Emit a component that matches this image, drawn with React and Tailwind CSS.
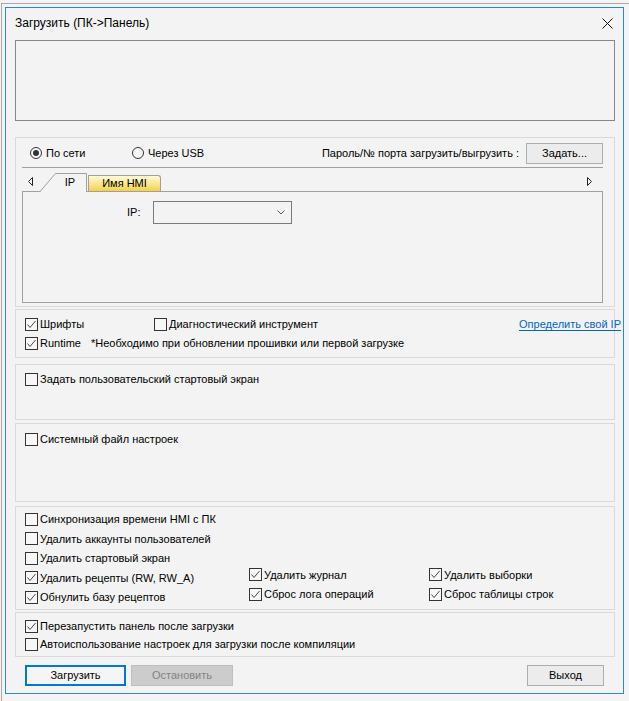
import React from 'react';

// Диалог "Загрузить (ПК->Панель)" в стиле Windows 10
const FONT = "font-['Liberation_Sans',Arial,sans-serif]";

const CheckMark = () => (
  <svg width="11" height="11" viewBox="0 0 11 11" className="block">
    <path d="M1.5 5.5 L4 8.5 L9.5 2" fill="none" stroke="#4a4a4a" strokeWidth="1" />
  </svg>
);

const Checkbox = ({ checked, label }) => (
  <div className="flex items-center">
    <div className="w-[13px] h-[13px] border border-[#333] bg-[#f7f7f7] flex items-center justify-center shrink-0">
      {checked && <CheckMark />}
    </div>
    <span className="ml-[2px] whitespace-nowrap text-[#000]">{label}</span>
  </div>
);

const Radio = ({ checked, label }) => (
  <div className="flex items-center">
    <div className="w-[12px] h-[12px] rounded-full border border-[#333] bg-[#f7f7f7] flex items-center justify-center shrink-0">
      {checked && <div className="w-[6px] h-[6px] rounded-full bg-[#333]" />}
    </div>
    <span className="ml-[4px] whitespace-nowrap">{label}</span>
  </div>
);

const Group = ({ className = '', children }) => (
  <div className={`border border-[#d9d9d9] ${className}`}>{children}</div>
);

const Button = ({ children, className = '' }) => (
  <button className={`h-[21px] flex items-center justify-center text-[11px] ${className}`}>{children}</button>
);

export default function App() {
  return (
    <div className={`w-[629px] h-[701px] bg-[#f4f4f4] pt-[3px] pl-[1px] overflow-hidden text-[11px] text-black ${FONT}`}>
      <div className="h-full border-t border-l border-[#a9a9a9] pt-[3px] pl-[3px]">
        <div className="w-[619px] h-[687px] border border-[#2b88d8] bg-[#f2f3f2] flex flex-col">
          {/* Заголовок */}
          <div className="h-[30px] flex items-center pl-[9px] pr-[10px]">
            <span className="text-[12px]">Загрузить (ПК-&gt;Панель)</span>
            <svg width="11" height="11" viewBox="0 0 11 11" className="ml-auto">
              <path d="M0.5 0.5 L10.5 10.5 M10.5 0.5 L0.5 10.5" stroke="#111" strokeWidth="1" />
            </svg>
          </div>

          <div className="pl-[9px] pr-[8px] flex flex-col">
            {/* Поле сообщений */}
            <div className="mt-[2px] h-[81px] border border-[#828790]" />

            {/* Соединение */}
            <Group className="mt-[16px] h-[170px] flex flex-col">
              <div className="mt-[5px] h-[20px] flex items-center pl-[14px] pr-[11px]">
                <div className="w-[102px]">
                  <Radio checked label="По сети" />
                </div>
                <Radio label="Через USB" />
                <span className="ml-auto mr-[7px]">Пароль/№ порта загрузить/выгрузить :</span>
                <Button className="w-[77px] border border-[#adadad] bg-[#ececec]">Задать...</Button>
              </div>
              <div className="mt-[4px] ml-[6px] mr-[11px] h-px bg-[#a0a0a0]" />

              <div className="ml-[6px] mr-[11px] flex flex-col">
                {/* Вкладки */}
                <div className="h-[23px] flex items-end">
                  <div className="w-[18px] h-[23px] flex items-center pl-[6px] pt-[4px]">
                    <svg width="5" height="9" viewBox="0 0 5 9">
                      <path d="M4.5 0.5 L0.5 4.5 L4.5 8.5 Z" fill="none" stroke="#222" strokeWidth="1" />
                    </svg>
                  </div>
                  <div className="relative z-10 -mb-px w-[48px] h-[19px] flex items-center justify-center pl-[12px]">
                    <svg width="48" height="19" viewBox="0 0 48 19" className="absolute inset-0">
                      <path d="M0 18.5 L15.5 0.5 H46.5 V18.5" fill="#f2f3f2" stroke="#a0a0a0" strokeWidth="1" />
                      <path d="M1 18.5 H46" stroke="#f2f3f2" strokeWidth="1.2" />
                    </svg>
                    <span className="relative">IP</span>
                  </div>
                  <div className="w-[73px] h-[16px] border border-b-0 border-[#a0a0a0] rounded-tr-[3px] bg-gradient-to-b from-[#fffbd6] to-[#f4d23c] flex items-center justify-center">
                    Имя HMI
                  </div>
                  <div className="flex-1" />
                  <div className="w-[16px] h-[23px] flex items-center pt-[4px]">
                    <svg width="5" height="9" viewBox="0 0 5 9">
                      <path d="M0.5 0.5 L4.5 4.5 L0.5 8.5 Z" fill="none" stroke="#222" strokeWidth="1" />
                    </svg>
                  </div>
                </div>

                {/* Панель вкладки */}
                <div className="h-[112px] border border-[#a0a0a0] pt-[9px] pl-[104px]">
                  <div className="flex items-center">
                    <span className="w-[26px]">IP:</span>
                    <div className="w-[139px] h-[23px] border border-[#7a7a7a] flex items-center justify-end pr-[6px]">
                      <svg width="8" height="5" viewBox="0 0 8 5">
                        <path d="M0.5 0.5 L4 4 L7.5 0.5" fill="none" stroke="#555" strokeWidth="1" />
                      </svg>
                    </div>
                  </div>
                </div>
              </div>
            </Group>

            {/* Шрифты / Runtime */}
            <Group className="mt-[2px] h-[49px] pt-[5px] pl-[9px]">
              <div className="h-[19px] flex items-center">
                <div className="w-[129px]">
                  <Checkbox checked label="Шрифты" />
                </div>
                <Checkbox label="Диагностический инструмент" />
                <a className="ml-auto -mr-[7px] text-[#0066cc] underline underline-offset-2 whitespace-nowrap cursor-pointer">
                  Определить свой IP
                </a>
              </div>
              <div className="h-[19px] flex items-center">
                <Checkbox checked label="Runtime" />
                <span className="ml-[10px] whitespace-nowrap">*Необходимо при обновлении прошивки или первой загрузке</span>
              </div>
            </Group>

            <Group className="mt-[6px] h-[56px] pt-[5px] pl-[9px]">
              <div className="h-[19px] flex items-center">
                <Checkbox label="Задать пользовательский стартовый экран" />
              </div>
            </Group>

            <Group className="mt-[3px] h-[79px] pt-[6px] pl-[9px]">
              <div className="h-[19px] flex items-center">
                <Checkbox label="Системный файл настроек" />
              </div>
            </Group>

            <Group className="mt-[4px] h-[104px] pt-[2.5px] pl-[9px]">
              <div className="h-[19.5px] flex items-center">
                <Checkbox label="Синхронизация времени HMI с ПК" />
              </div>
              <div className="h-[19.5px] flex items-center">
                <Checkbox label="Удалить аккаунты пользователей" />
              </div>
              <div className="h-[19.5px] flex items-center">
                <Checkbox label="Удалить стартовый экран" />
              </div>
              <div className="flex">
                <div className="w-[224px]">
                  <div className="h-[19.5px] flex items-center">
                    <Checkbox checked label="Удалить рецепты (RW, RW_A)" />
                  </div>
                  <div className="h-[19.5px] flex items-center">
                    <Checkbox checked label="Обнулить базу рецептов" />
                  </div>
                </div>
                <div className="w-[180px] -mt-[3px]">
                  <div className="h-[19.5px] flex items-center">
                    <Checkbox checked label="Удалить журнал" />
                  </div>
                  <div className="h-[19.5px] flex items-center">
                    <Checkbox checked label="Сброс лога операций" />
                  </div>
                </div>
                <div className="-mt-[3px]">
                  <div className="h-[19.5px] flex items-center">
                    <Checkbox checked label="Удалить выборки" />
                  </div>
                  <div className="h-[19.5px] flex items-center">
                    <Checkbox checked label="Сброс таблицы строк" />
                  </div>
                </div>
              </div>
            </Group>

            <Group className="mt-[2px] h-[45px] pt-[4px] pl-[9px]">
              <div className="h-[18px] flex items-center">
                <Checkbox checked label="Перезапустить панель после загрузки" />
              </div>
              <div className="h-[18px] flex items-center">
                <Checkbox label="Автоиспользование настроек для загрузки после компиляции" />
              </div>
            </Group>

            {/* Кнопки */}
            <div className="mt-[8px] flex items-center pl-[10px] pr-[11px]">
              <Button className="w-[101px] border-2 border-[#0078d7] bg-[#f5f5f5]">Загрузить</Button>
              <Button className="ml-[5px] w-[102px] border border-[#bfbfbf] bg-[#cccccc] text-[#838383]">Остановить</Button>
              <Button className="ml-auto w-[77px] border border-[#adadad] bg-[#ececec]">Выход</Button>
            </div>
          </div>
        </div>
      </div>
    </div>
  );
}
